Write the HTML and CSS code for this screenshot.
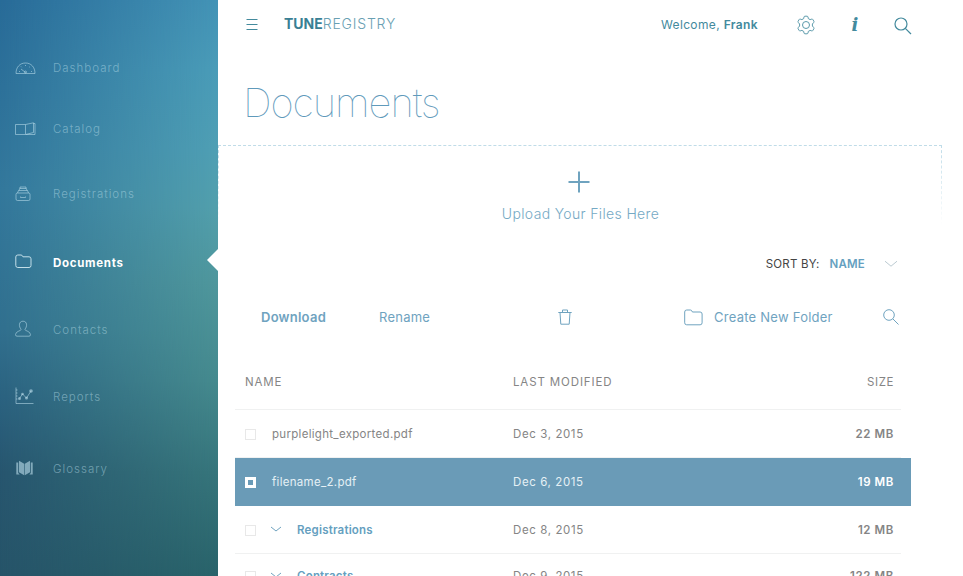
FILE: index.html
```html
<!DOCTYPE html>
<html lang="en">
<head>
<meta charset="UTF-8" />
<meta name="viewport" content="width=device-width, initial-scale=1" />
<title>TuneRegistry - Documents</title>
<link rel="stylesheet" href="styles.css">
</head>
<body>

<!-- Sidebar -->
<nav class="sidebar">
  <a class="nav-item">
    <svg class="nav-icon" width="21" height="14" viewBox="0 0 21 14"><path d="M1 12.500C1 6 5 2 10.500 2S20 6 20 12.500Z"/><path d="M10.500 11.500L6 8M4 10.500h1M16 10.500h1M10.500 4v1M6 5.500l.7.700M15 5.500l-.7.700"/><circle cx="10.500" cy="11" r="1"/></svg>
    <span>Dashboard</span>
  </a>
  <a class="nav-item catalog">
    <svg class="nav-icon" width="21" height="14" viewBox="0 0 21 14"><path d="M10.500 2.500H.5v10h10M10.500 2.500L18.500 .8v9.700L10.500 12.500ZM18.500 1.500h1.500v11h-9"/></svg>
    <span>Catalog</span>
  </a>
  <a class="nav-item registrations">
    <svg class="nav-icon" width="17" height="16" viewBox="0 0 17 16"><rect x="1" y="7" width="14" height="7.500" rx="1.500"/><path d="M2.500 7l1-2.500h9l1 2.500M4 4.500l.7-2h6.600l.7 2M5 2.500V1h6v1.500M5.500 10.500v1h5v-1"/></svg>
    <span>Registrations</span>
  </a>
  <a class="nav-item documents active">
    <svg class="nav-icon" width="18" height="15" viewBox="0 0 18 15"><path d="M.8 3q0-2 2-2H6q1 0 1.500 1l.4.800h6.100q2 0 2 2V11.500q0 2-2 2H2.800q-2 0-2-2Z"/></svg>
    <span>Documents</span>
  </a>
  <a class="nav-item contacts">
    <svg class="nav-icon" width="17" height="18" viewBox="0 0 17 18"><path d="M6.200 9.500C3.500 6.500 3.700 1.200 8 1.200s4.500 5.300 1.800 8.300c.5 1.500 5.700 1.800 5.700 5.200q0 1.500-1.500 1.500H2q-1.500 0-1.500-1.500c0-3.400 5.200-3.700 5.700-5.200Z"/></svg>
    <span>Contacts</span>
  </a>
  <a class="nav-item reports">
    <svg class="nav-icon" width="19" height="18" viewBox="0 0 19 18"><path d="M1 .5v16h17.500M1 3h1.500M1 6h1.500M1 9h1.500M1 12h1.500M4.500 11.500l3-4.500 4 4 4.500-7"/><g class="solid"><circle cx="4.500" cy="11.500" r="1.500"/><circle cx="7.500" cy="7" r="1.300"/><circle cx="11.500" cy="11" r="1.500"/><circle cx="16" cy="4" r="1.800"/></g></svg>
    <span>Reports</span>
  </a>
  <a class="nav-item glossary">
    <svg class="nav-icon" width="19" height="16" viewBox="0 0 19 16"><g class="solid"><path d="M4 .8l5.200 3v11.500l-5.200-3ZM15 .8l-5.200 3v11.500l5.200-3ZM1.300 2.500h1.900v10.500l1.500 1.500H1.300ZM17.700 2.500h-1.900v10.500l-1.500 1.500H17.700Z"/></g></svg>
    <span>Glossary</span>
  </a>
  <div class="pointer"></div>
</nav>

<!-- Main content -->
<main class="main">
  <header class="topbar">
    <svg class="menu" width="12" height="13" viewBox="0 0 12 13"><path d="M.5 1.500h11M.5 6.500h11M.5 11.500h11"/></svg>
    <div class="logo"><b>TUNE</b><span>REGISTRY</span></div>
    <div class="welcome">Welcome, <b>Frank</b></div>
    <svg class="gear" width="20" height="20" viewBox="0 0 20 20"><path d="M9 1.200h2q.8 0 1 .8l.3 1.600 1.800 1 1.700-.5q.7-.2 1.100.5l1 1.700q.4.700-.2 1.200L16.400 9v2l1.300 1.500q.6.500.2 1.200l-1 1.700q-.4.700-1.100.5l-1.700-.5-1.800 1-.3 1.600q-.2.800-1 .8H9q-.8 0-1-.8l-.3-1.600-1.800-1-1.700.5q-.7.200-1.100-.5l-1-1.700q-.4-.7.2-1.200L3.600 11V9L2.300 7.500q-.6-.5-.2-1.200l1-1.700q.4-.7 1.100-.5l1.700.5 1.800-1L8 2q.2-.8 1-.8Z"/><circle cx="10" cy="10" r="3.500"/></svg>
    <div class="info">i</div>
    <svg class="search" width="18" height="18" viewBox="0 0 18 18"><circle cx="7" cy="7" r="6"/><path d="M11.300 11.300L17 17"/></svg>
  </header>

  <h1 class="title">Documents</h1>

  <section class="upload">
    <svg width="22" height="22" viewBox="0 0 22 22"><path d="M11 .5v21M.5 11h21"/></svg>
    <div class="upload-text">Upload Your Files Here</div>
  </section>

  <div class="sort">
    <span class="sort-label">SORT BY:</span>
    <b class="sort-value">NAME</b>
    <svg width="14" height="8" viewBox="0 0 14 8"><path d="M1 1.200l6 5 6-5"/></svg>
  </div>

  <div class="toolbar">
    <b class="download">Download</b>
    <span class="rename">Rename</span>
    <svg class="trash" width="14" height="16" viewBox="0 0 14 16"><path d="M.3 3.500h13.400M4.500 3.500V1h5v2.500M2 3.500l.8 11.700h8.400L12 3.500"/></svg>
    <svg class="folder" width="19" height="17" viewBox="0 0 19 17"><path d="M.7 3q0-2 2-2h3.700q1 0 1.500 1l.5 1h7.700q2 0 2 2v8.800q0 2-2 2H2.700q-2 0-2-2Z"/></svg>
    <span class="create">Create New Folder</span>
    <svg class="find" width="16" height="16" viewBox="0 0 16 16"><circle cx="6" cy="6" r="5.300"/><path d="M9.800 9.800l5.700 5.700"/></svg>
  </div>

  <!-- File list -->
  <div class="files">
    <div class="row head">
      <span class="name">NAME</span>
      <span class="date">LAST MODIFIED</span>
      <span class="size">SIZE</span>
    </div>
    <div class="row">
      <div class="name"><i class="check"></i><span class="file">purplelight_exported.pdf</span></div>
      <span class="date">Dec 3, 2015</span>
      <b class="size">22 MB</b>
    </div>
    <div class="row selected">
      <div class="name"><i class="check"></i><span class="file">filename_2.pdf</span></div>
      <span class="date">Dec 6, 2015</span>
      <b class="size">19 MB</b>
    </div>
    <div class="row">
      <div class="name"><i class="check"></i><svg class="chevron" width="12" height="7" viewBox="0 0 12 7"><path d="M1 1l5 4 5-4"/></svg><b>Registrations</b></div>
      <span class="date">Dec 8, 2015</span>
      <b class="size">12 MB</b>
    </div>
    <div class="row">
      <div class="name"><i class="check"></i><svg class="chevron" width="12" height="7" viewBox="0 0 12 7"><path d="M1 1l5 4 5-4"/></svg><b>Contracts</b></div>
      <span class="date">Dec 9, 2015</span>
      <b class="size">122 MB</b>
    </div>
  </div>
</main>

</body>
</html>
```
FILE: styles.css
```css
* {
  box-sizing: border-box;
}
body {
  margin: 0;
  display: flex;
  height: 576px;
  overflow: hidden;
  background-color: #fff;
  font-family: Inter, "Liberation Sans", sans-serif;
  font-size: 11.5px;
  color: #858585;
}
b {
  font-weight: 600;
}
svg {
  fill: none;
  stroke: #6fa3bf;
  flex: none;
}
/* Sidebar */
.sidebar {
  position: relative;
  isolation: isolate;
  flex: none;
  width: 218px;
  padding: 56px 0 0 15px;
  background: linear-gradient(#286b98, #33789c 33%, #31708f 57%, #2b6280 69%, #27566f 82%, #265469);
}
/* Greener right side, faded in from the left */
.sidebar::before {
  content: "";
  position: absolute;
  inset: 0;
  z-index: -1;
  background: linear-gradient(#4393b6, #4a9cb8 12%, #4f9fb4 26%, #529fac 36%, #4f979c 49%, #458a8e 66%, #36757b 82%, #29636a);
  -webkit-mask-image: linear-gradient(to right, transparent, #000);
  mask-image: linear-gradient(to right, transparent, #000);
}
.nav-item {
  display: flex;
  align-items: center;
  height: 24px;
  color: rgba(190,224,236,0.48);
  letter-spacing: 1px;
}
.nav-item span {
  width: 165px;
  margin-top: -1px;
  font-weight: 300;
}
.nav-icon {
  margin-right: auto;
  stroke: rgba(190,224,236,0.55);
}
.nav-icon .solid {
  fill: rgba(190,224,236,0.6);
  stroke: none;
}
.catalog { margin-top: 37px; }
.registrations { margin-top: 41px; }
.documents,
.contacts { margin-top: 44px; }
.reports { margin-top: 43px; }
.glossary { margin-top: 48px; }
.nav-item.active {
  color: #fff;
  letter-spacing: 0.7px;
}
.nav-item.active span {
  margin-top: 1px;
  font-weight: 700;
}
.active .nav-icon {
  margin-top: -2px;
  stroke: #c3dfe8;
}
.contacts .nav-icon,
.reports .nav-icon,
.glossary .nav-icon {
  margin-top: -3px;
}
.pointer {
  position: absolute;
  right: 0;
  top: 249px;
  border: 11px solid transparent;
  border-left: 0;
  border-right: 11px solid #fff;
}
/* Main column */
.main {
  flex: 1;
  min-width: 0;
}
.topbar {
  display: flex;
  align-items: center;
  height: 50px;
  padding-left: 28px;
  color: #438a9d;
}
.topbar svg {
  stroke: #5b9aab;
}
.topbar .menu {
  margin-top: -2px;
  stroke: #438a9d;
}
.logo {
  width: 377px;
  margin: -3px 0 0 26px;
  font-size: 14px;
  color: #69a0b3;
}
.logo b {
  color: #397f94;
  font-weight: 700;
}
.logo span {
  font-weight: 300;
  letter-spacing: 0.8px;
}
.welcome {
  width: 135px;
  margin-top: -1px;
  font-size: 12px;
  letter-spacing: 0.35px;
}
.info {
  width: 10px;
  margin: -2px 34px 0;
  font: italic bold 18px "DejaVu Serif", serif;
  text-align: center;
}
.topbar .search {
  margin-top: 2px;
  stroke: #438a9d;
  stroke-width: 1.2;
}
.title {
  margin: 26px 0 0 25px;
  height: 69px;
  font-size: 40px;
  line-height: 54px;
  font-weight: 100;
  letter-spacing: -1.1px;
  color: #5f9abb;
}
.upload {
  position: relative;
  display: flex;
  flex-direction: column;
  align-items: center;
  width: 722px;
  height: 80px;
  padding-top: 26px;
}
.upload::before {
  content: "";
  position: absolute;
  inset: 0 -2px 0 0;
  border: 1px dashed #bfdce8;
  border-bottom: 0;
  -webkit-mask-image: linear-gradient(#000, transparent);
  mask-image: linear-gradient(#000, transparent);
}
.upload svg {
  stroke-width: 2;
}
.upload-text {
  margin: 12px 0 0 3px;
  font-size: 14px;
  line-height: 17px;
  font-weight: 300;
  letter-spacing: 0.35px;
  color: #75a9c4;
}
.sort {
  display: flex;
  align-items: center;
  justify-content: flex-end;
  height: 20px;
  margin-top: 29px;
  padding-right: 65px;
  letter-spacing: 0.2px;
  color: #444;
}
.sort-value {
  margin: 0 19px 0 10px;
  color: #659fc0;
}
.sort svg {
  stroke: #bccbd2;
}
.toolbar {
  display: flex;
  align-items: center;
  height: 20px;
  margin-top: 33px;
  padding-left: 43px;
  font-size: 13px;
  letter-spacing: 0.25px;
  color: #6fa3bf;
}
.download {
  width: 118px;
}
.rename {
  width: 179px;
}
.folder {
  margin: 0 11px 0 112px;
}
.create {
  width: 169px;
}
/* File list */
.files {
  width: 676px;
  margin: 28px 0 0 17px;
}
.row {
  display: flex;
  align-items: center;
  width: 666px;
  height: 48px;
  padding-left: 10px;
  border-bottom: 1px solid #f0f1f1;
}
.row.head {
  height: 55px;
  letter-spacing: 0.85px;
}
.row:last-child {
  height: 44px;
}
.row .name {
  display: flex;
  align-items: center;
  width: 268px;
}
.row .size {
  margin-left: auto;
  padding-right: 7px;
  letter-spacing: 0.6px;
}
.date {
  letter-spacing: 0.6px;
}
.head .date {
  letter-spacing: 0.87px;
}
.file {
  letter-spacing: 0.3px;
}
.name b {
  letter-spacing: 0.2px;
  color: #659fc0;
}
.check {
  width: 11px;
  height: 11px;
  margin: 1px 16px 0 0;
  border: 1px solid #e8e8e8;
}
.chevron {
  margin: 0 15px 0 -2px;
}
.row.selected {
  width: 676px;
  padding-right: 10px;
  border-bottom-color: #6a9bb7;
  background-color: #6a9bb7;
  color: #e5f0f5;
}
.selected .check {
  border: 3px solid #fff;
}
.selected .size {
  color: #fff;
}
```
